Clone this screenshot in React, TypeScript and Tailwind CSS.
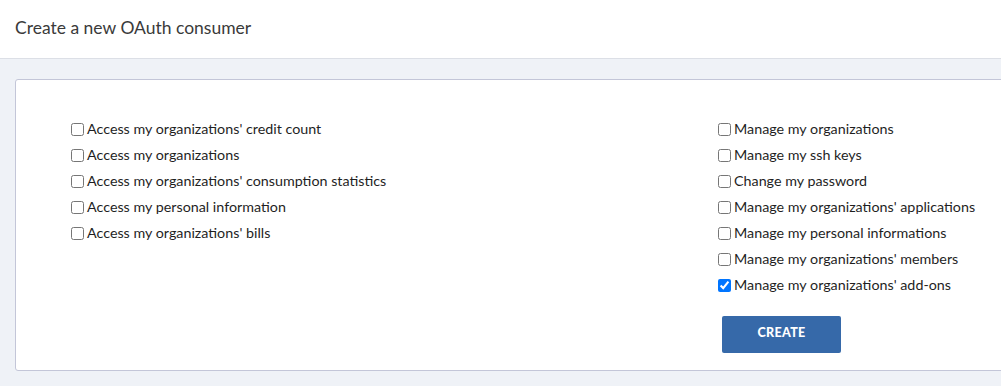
const leftScopes = [
  "Access my organizations' credit count",
  'Access my organizations',
  "Access my organizations' consumption statistics",
  'Access my personal information',
  "Access my organizations' bills",
]

const rightScopes = [
  { label: 'Manage my organizations', checked: false },
  { label: 'Manage my ssh keys', checked: false },
  { label: 'Change my password', checked: false },
  { label: "Manage my organizations' applications", checked: false },
  { label: 'Manage my personal informations', checked: false },
  { label: "Manage my organizations' members", checked: false },
  { label: "Manage my organizations' add-ons", checked: true },
]

function Scope({ label, checked = false }: { label: string; checked?: boolean }) {
  return (
    <label className="flex items-center h-[26px] text-[14.3px] text-[#1f1f1f]">
      <input type="checkbox" defaultChecked={checked} className="m-0 mr-[3px] w-[13px] h-[13px]" />
      <span>{label}</span>
    </label>
  )
}

export default function App() {
  return (
    <div
      className="w-[1001px] h-[386px] overflow-hidden bg-[#eff2f7]"
      style={{ fontFamily: 'Lato, "Liberation Sans", sans-serif' }}
    >
      <div className="h-[59px] bg-white border-b border-[#dcdfe6] flex items-center px-[15px]">
        <h1 className="text-[17.5px] text-[#3a3a3a] -mt-[2px]">Create a new OAuth consumer</h1>
      </div>
      <div className="pt-[20px] pl-[15px]">
        <div className="w-[1020px] h-[292px] bg-white border border-[#c3c6d8] rounded-l-[3px] pt-[36px] pl-[55px]">
          <div className="flex">
            <div className="w-[647px]">
              {leftScopes.map((s) => (
                <Scope key={s} label={s} />
              ))}
            </div>
            <div>
              {rightScopes.map((s) => (
                <Scope key={s.label} label={s.label} checked={s.checked} />
              ))}
              <button className="mt-[18px] ml-[4px] w-[119px] h-[37px] bg-[#3669a9] rounded-[2px] text-white text-[12.5px] font-black tracking-wide pb-[2px]">
                CREATE
              </button>
            </div>
          </div>
        </div>
      </div>
    </div>
  )
}
